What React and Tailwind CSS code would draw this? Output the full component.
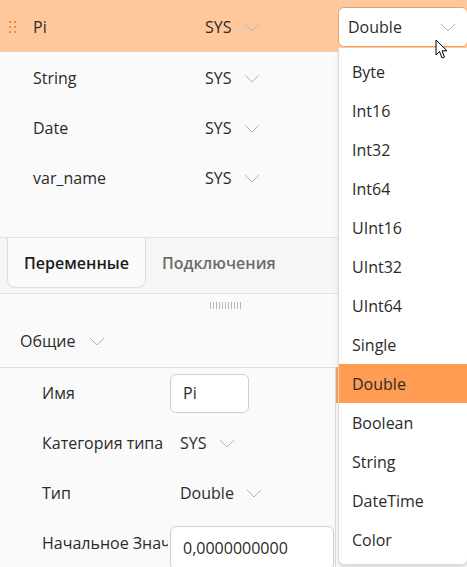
import React from 'react';

const font = { fontFamily: '"Open Sans", "Noto Sans", sans-serif' };

const Chevron = ({ className = '' }) => (
  <svg width="16" height="9" viewBox="0 0 16 9" className={className}>
    <polyline points="1,1 8,8 15,1" fill="none" stroke="#b4b4b4" strokeWidth="1" />
  </svg>
);

const Handle = () => (
  <div className="grid grid-cols-2 gap-x-[3px] gap-y-[3px] w-[7px]">
    {Array.from({ length: 6 }).map((_, i) => (
      <span key={i} className="w-[2px] h-[2px] bg-[#f08a3c]" />
    ))}
  </div>
);

const rows = ['Pi', 'String', 'Date', 'var_name'];
const types = ['Byte', 'Int16', 'Int32', 'Int64', 'UInt16', 'UInt32', 'UInt64', 'Single', 'Double', 'Boolean', 'String', 'DateTime', 'Color'];

const VarRow = ({ name, active }) => (
  <div className={`flex items-center ${active ? 'h-[52px] pt-[2px] bg-[#ffc89c]' : 'h-[50px] pt-[2px]'}`}>
    <div className="w-[33px] pl-[9px] flex items-center">{active && <Handle />}</div>
    <div className="w-[172px] text-[#2b2b2b]">{name}</div>
    <div className="flex items-center gap-[12px] text-[#2b2b2b]">
      SYS <Chevron />
    </div>
  </div>
);

const PropRow = ({ label, children }) => (
  <div className="flex items-center h-[50px]">
    <div className="w-[168px] mr-[2px] pl-[42px] whitespace-nowrap overflow-hidden text-[#2b2b2b]">{label}</div>
    <div className="flex-1 flex items-center h-full">{children}</div>
  </div>
);

export default function App() {
  return (
    <div className="relative w-[467px] h-[567px] overflow-hidden bg-[#fafafa] text-[16px]" style={font}>
      {rows.map((r, i) => (
        <VarRow key={r} name={r} active={i === 0} />
      ))}
      <div className="h-[35px]" />

      <div className="h-[56px] bg-[#f6f6f6] border-t border-[#e2e2e2] flex">
        <div className="ml-[7px] w-[139px] h-[50px] bg-[#fafafa] border border-t-0 border-[#dedede] rounded-b-lg flex items-center justify-center font-semibold text-[#1c1c1c]">
          Переменные
        </div>
        <div className="pl-[16px] h-[50px] flex items-center font-semibold text-[#6b6b6b]">Подключения</div>
      </div>

      <div className="border-t border-[#e2e2e2] bg-[#fafafa]">
        <div className="flex justify-center pt-[8px] pl-[10px] gap-[2px] w-[440px]">
          {Array.from({ length: 11 }).map((_, i) => (
            <span key={i} className="w-[1px] h-[7px] bg-[#b8b8b8]" />
          ))}
        </div>
        <div className="h-[58px] flex items-center pl-[20px] gap-[14px] text-[#2b2b2b] pt-[6px]">
          Общие <Chevron />
        </div>
        <div className="flex">
          <div className="w-[336px] border-t border-r border-[#dcdcdc]">
            <PropRow label="Имя">
              <div className="w-[79px] h-[39px] border border-[#cfcfcf] rounded-md bg-white flex items-center pl-[12px] text-[#2b2b2b]">Pi</div>
            </PropRow>
            <PropRow label="Категория типа">
              <div className="pl-[10px] flex items-center gap-[12px] text-[#2b2b2b]">SYS <Chevron /></div>
            </PropRow>
            <PropRow label="Тип">
              <div className="pl-[10px] flex items-center gap-[12px] text-[#2b2b2b]">Double <Chevron /></div>
            </PropRow>
            <PropRow label="Начальное Значение">
              <div className="w-[164px] h-[44px] mt-[10px] border border-[#cfcfcf] rounded-md bg-white flex items-center pl-[12px] text-[#2b2b2b]">0,0000000000</div>
            </PropRow>
          </div>
          <div className="w-[3px] h-[36px] bg-[#f5a262]" />
        </div>
      </div>

      {/* open select */}
      <div className="absolute left-[338px] top-[7px] w-[130px] h-[40px] bg-white border border-[#f0a064] rounded-md flex items-center justify-between pl-[9px] pr-[11px] text-[#2b2b2b]">
        Double <Chevron />
      </div>
      <div className="absolute left-[338px] top-[48px] w-[130px] h-[517px] bg-white border border-t-0 border-[#dadada] rounded-b-md shadow-md pt-[4px]">
        {types.map((t, i) => (
          <div key={t} className={`h-[39px] flex items-center pl-[13px] text-[#2b2b2b] ${i === 8 ? 'bg-[#ff9c52]' : ''}`}>
            {t}
          </div>
        ))}
      </div>

      {/* cursor */}
      <svg className="absolute left-[435px] top-[39px]" width="14" height="21" viewBox="0 0 14 21">
        <path d="M1 1 L1 16 L4.5 12.5 L7 19 L9.5 18 L7 11.8 L12 11.8 Z" fill="#fff" stroke="#000" strokeWidth="1" strokeLinejoin="round" />
      </svg>
    </div>
  );
}
